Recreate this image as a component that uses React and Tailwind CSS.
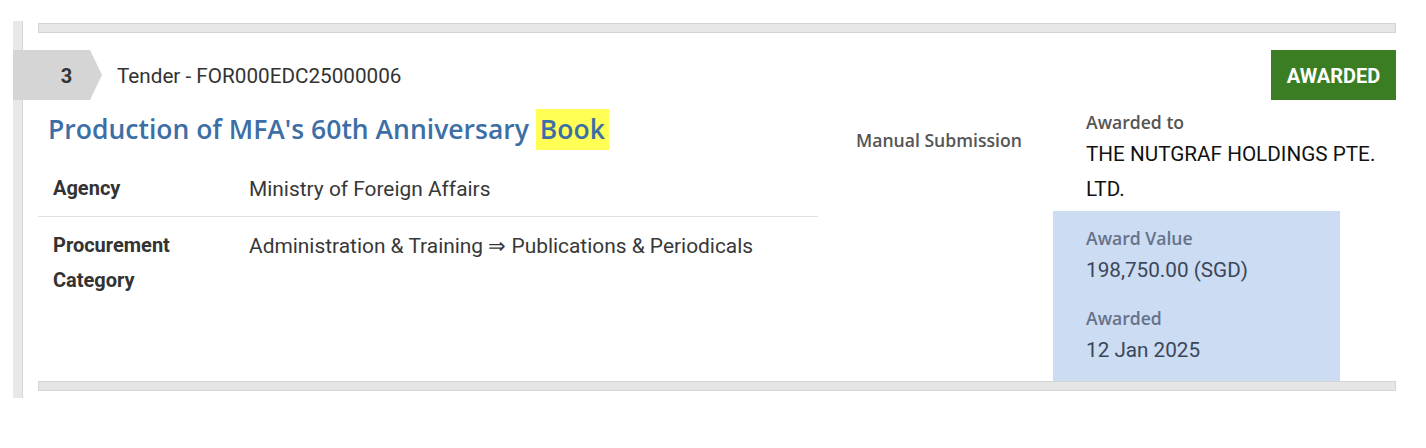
import React from 'react';

const rob = "font-['Roboto','Liberation_Sans',sans-serif]";
const open = "font-['Open_Sans','Noto_Sans',sans-serif]";

const DetailRow = ({ label, value, divider }) => (
  <div className={`flex pl-[15px] ${divider ? 'pb-[9px] border-b border-[#e2e2e2]' : 'pt-[11px]'}`}>
    <div className="w-[196px] shrink-0 text-[20px] leading-[35px] font-bold text-[#333]">{label}</div>
    <div className="text-[20.9px] leading-[36px] text-[#383838]">{value}</div>
  </div>
);

export default function App() {
  return (
    <div className={`min-h-screen bg-white pt-[21px] ${rob}`}>
      <div className="ml-[13px] mr-[30px] flex">
        {/* left rail */}
        <div className="w-[10px] shrink-0 bg-[#e8e8e8] border-r border-[#d6d6d6]" />

        <div className="flex-1 pl-[15px] pt-[2px] pb-[7px]">
          <div className="h-[10px] bg-[#e6e6e6] border border-[#d4d4d4]" />

          {/* header */}
          <div className="mt-[17px] flex items-center justify-between h-[50px]">
            <div className="flex items-center">
              <div className="-ml-[25px] w-[89px] h-[50px] bg-[#d5d5d5] flex items-center justify-center pr-[12px] pt-[2px] [clip-path:polygon(0_0,77px_0,89px_50%,77px_100%,0_100%)]">
                <span className="pl-[30px] text-[20px] font-bold text-[#333]">3</span>
              </div>
              <span className="ml-[15px] pt-[3px] text-[20.7px] text-[#333]">Tender - FOR000EDC25000006</span>
            </div>
            <div className="h-[50px] w-[125px] bg-[#3a7d23] flex items-center justify-center pt-[1px] text-white text-[20px] font-bold">
              AWARDED
            </div>
          </div>

          {/* body */}
          <div className="flex">
            <div className="w-[780px] shrink-0">
              <h2 className={`${open} mt-[9px] pl-[10px] text-[26.5px] leading-[41px] font-semibold text-[#3d6fa6]`}>
                Production of MFA's 60th Anniversary{' '}
                <span className="bg-[#ffff55] px-[4px] inline-block">Book</span>
              </h2>
              <div className="mt-[21px]">
                <DetailRow label="Agency" value="Ministry of Foreign Affairs" divider />
                <DetailRow
                  label={<>Procurement<br />Category</>}
                  value="Administration & Training ⇒ Publications & Periodicals"
                />
              </div>
            </div>

            <div className="w-[235px] shrink-0 pl-[38px] pt-[28px]">
              <div className={`${open} text-[17.6px] leading-[24px] font-semibold text-[#555]`}>Manual Submission</div>
            </div>

            <div className="flex-1 pt-[10px]">
              <div className="pl-[33px]">
                <div className={`${open} text-[17.6px] leading-[24px] font-semibold text-[#555]`}>Awarded to</div>
                <div className="mt-[3px] text-[20.7px] leading-[35px] text-[#111]">THE NUTGRAF HOLDINGS PTE. LTD.</div>
              </div>
              <div className="mt-[4px] w-[287px] bg-[#cbdcf3] pl-[33px] pt-[15px] pb-[17px]">
                <div className={`${open} text-[17.6px] leading-[24px] font-semibold text-[#66728a]`}>Award Value</div>
                <div className="mt-[6px] text-[20.7px] leading-[28px] text-[#3b4659]">198,750.00 (SGD)</div>
                <div className={`${open} mt-[22px] text-[17.6px] leading-[24px] font-semibold text-[#66728a]`}>Awarded</div>
                <div className="mt-[6px] text-[20.7px] leading-[28px] text-[#3b4659]">12 Jan 2025</div>
              </div>
            </div>
          </div>

          <div className="h-[10px] bg-[#e6e6e6] border border-[#d4d4d4]" />
        </div>
      </div>
    </div>
  );
}
